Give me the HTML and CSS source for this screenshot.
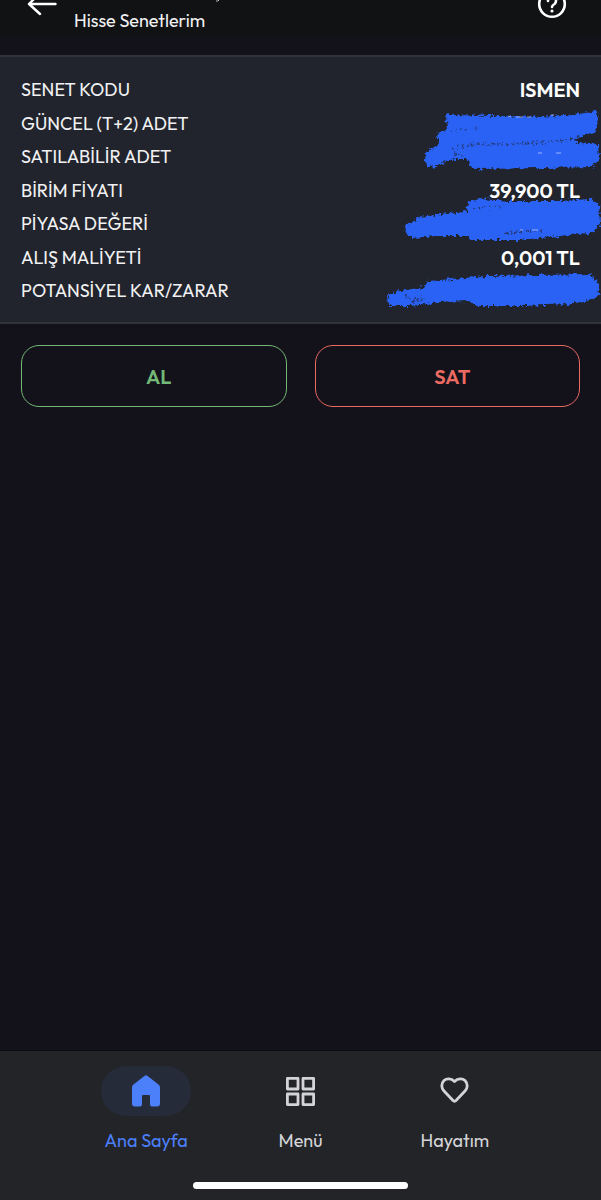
FILE: index.html
```
<!DOCTYPE html>
<html lang="tr">
<head>
    <meta charset="UTF-8">
    <meta name="viewport" content="width=device-width, initial-scale=1.0">
    <title>Hisse Senetlerim</title>
    <link rel="stylesheet" href="styles.css">
</head>
<body>
    <header class="header">
        <button class="icon-button" aria-label="Geri">
            <svg width="32" height="32" viewBox="0 0 32 32" fill="none" stroke="#fff" stroke-width="2.400" stroke-linecap="round" stroke-linejoin="round">
                <path d="M29.500 17H3M14 6L3 17l11 10"/>
            </svg>
        </button>
        <div class="header-text">
            <svg class="header-mark" width="4" height="2" viewBox="0 0 4 2"><path d="M0 1h2l1-1" stroke="#bbb" fill="none"/></svg>
            <h1>Hisse Senetlerim</h1>
        </div>
        <button class="icon-button" aria-label="Yardım">
            <svg width="32" height="32" viewBox="0 0 32 32" fill="none" stroke="#fff" stroke-width="2.600" stroke-linecap="round">
                <circle cx="16" cy="17" r="12.800"/>
                <path d="M12 14a4 4 0 1 1 6.500 3q-2.500 1.500-2.500 3"/>
                <circle cx="16" cy="24" r="1.600" fill="#fff" stroke="none"/>
            </svg>
        </button>
    </header>
    <main>
        <!-- Hisse bilgileri -->
        <section class="card">
            <dl class="details">
                <div class="row"><dt>SENET KODU</dt><dd>ISMEN</dd></div>
                <div class="row"><dt>GÜNCEL (T+2) ADET</dt><dd></dd></div>
                <div class="row"><dt>SATILABİLİR ADET</dt><dd></dd></div>
                <div class="row"><dt>BİRİM FİYATI</dt><dd>39,900 TL</dd></div>
                <div class="row"><dt>PİYASA DEĞERİ</dt><dd></dd></div>
                <div class="row"><dt>ALIŞ MALİYETİ</dt><dd>0,001 TL</dd></div>
                <div class="row"><dt>POTANSİYEL KAR/ZARAR</dt><dd></dd></div>
            </dl>
            <!-- Gizlenen tutarlar -->
            <svg class="scribble" width="221" height="210" viewBox="380 105 221 210" fill="#2962f6" aria-hidden="true">
                <defs>
                    <filter id="rough" x="-5%" y="-15%" width="110%" height="130%">
                        <feTurbulence type="fractalNoise" baseFrequency="0.3" numOctaves="2" seed="4"/>
                        <feDisplacementMap in="SourceGraphic" scale="7" xChannelSelector="R" yChannelSelector="G"/>
                        <feGaussianBlur stdDeviation="0.6"/>
                    </filter>
                </defs>
                <g filter="url(#rough)">
                    <path d="M446 115L500 116 540 117 585 113 597 111 598 121 595 133 575 138 577 143 598 144 599 160 591 167 548 168 472 169 468 159 458 159 446 161 437 166 428 167 424 160 426 152 436 147 439 144 437 133 447 130z"/>
                    <path d="M405 225L421 217 448 213 468 212 467 202 479 199 510 201 560 201 590 199 599 203 600 226 590 233 550 237 519 240 471 240 468 236 437 236 412 238 406 233z"/>
                    <path d="M388 295L400 291 424 287 428 281 465 278 485 276 540 275 590 274 597 280 600 292 596 298 572 304 520 306 475 306 469 301 440 302 409 306 389 306z"/>
                </g>
                <!-- Fırçanın seyrek kalan yerleri -->
                <g filter="url(#rough)" fill="none" stroke="#222a48" stroke-width="2" opacity="0.7">
                    <path stroke-dasharray="2 3" d="M450 131l30-3M452 149l24-5 35 0 50-3M454 153l10 3M560 141l20-2M474 209l30-3M505 233l40-2M405 296l14 4M412 302l12-4"/>
                </g>
                <path d="M508 116l3 1M516 117h7M527 117h4M551 115h3M538 153h4M556 153h5M520 230h3M532 230h6" fill="none" stroke="#c9d8ff" opacity="0.7"/>
            </svg>
        </section>
        <!-- Alım satım butonları -->
        <div class="actions">
            <button class="action-button buy">AL</button>
            <button class="action-button sell">SAT</button>
        </div>
    </main>
    <!-- Alt menü -->
    <footer class="bottom-bar">
        <nav class="nav">
            <a class="nav-item active" href="#">
                <span class="nav-icon">
                    <svg width="32" height="32" viewBox="0 0 32 32" fill="#4c7ffa">
                        <path d="M14.400 1Q16 -0.500 17.600 1L28.500 9.500Q30 10.600 30 12.500V28.500Q30 31.500 27 31.500H22Q20 31.500 20 29.500V21Q20 20 19 20H13Q12 20 12 21V29.500Q12 31.500 10 31.500H5Q2 31.500 2 28.500V12.500Q2 10.600 3.500 9.500z"/>
                    </svg>
                </span>
                Ana Sayfa
            </a>
            <a class="nav-item" href="#">
                <span class="nav-icon">
                    <svg width="32" height="32" viewBox="0 0 32 32" fill="none" stroke="#d4d4d8" stroke-width="2.800" stroke-linejoin="round">
                        <path d="M3.400 3.400H14V14H3.400zM19 3.400h10.600V14H19zM3.400 19H14v10.600H3.400zM19 19h10.600v10.600H19z"/>
                    </svg>
                </span>
                Menü
            </a>
            <a class="nav-item" href="#">
                <span class="nav-icon">
                    <svg width="32" height="32" viewBox="0 0 32 32" fill="none" stroke="#d4d4d8" stroke-width="2.800" stroke-linejoin="round">
                        <path d="M15.500 6.500C12 3 7.500 3.200 5 5.600C2 8.600 2.200 13 4.800 15.800L14 25.500Q15.500 27 17 25.500L26.200 15.800C28.800 13 29 8.600 26 5.600C23.500 3.200 19 3 15.500 6.500z"/>
                    </svg>
                </span>
                Hayatım
            </a>
        </nav>
        <div class="home-indicator"></div>
    </footer>
</body>
</html>
```

FILE: styles.css
```
* {
    box-sizing: border-box;
}
body {
    margin: 0;
    min-height: 100vh;
    display: flex;
    flex-direction: column;
    background-color: #13111a;
    color: #f1f1f3;
    font-family: Outfit, Lato, sans-serif;
    font-size: 18px;
}
button {
    font-family: inherit;
    cursor: pointer;
}
.header {
    display: flex;
    align-items: flex-start;
    height: 36px;
    padding: 0 33px 0 26px;
    background-color: #101213;
    overflow: hidden;
}
.icon-button {
    display: flex;
    margin-top: -13px;
    padding: 0;
    border: none;
    background: none;
}
.header-text {
    flex: 1;
    padding-left: 16px;
}
.header-mark {
    display: block;
    margin-left: 142px;
}
h1 {
    margin: 0;
    padding-top: 7px;
    font-size: 18px;
    line-height: 24px;
    font-weight: 400;
}
main {
    flex: 1;
    padding-top: 19px;
}
.card {
    position: relative;
    padding: 21px 21px 19px;
    background-color: #21242c;
    border-top: 2px solid #32323a;
    border-bottom: 2px solid #32323a;
}
.details {
    display: flex;
    flex-direction: column;
    justify-content: space-between;
    min-height: 225px;
    margin: 0;
}
.row {
    display: flex;
    justify-content: space-between;
    line-height: 24px;
}
dd {
    margin: 0;
    color: #fff;
    font-size: 20px;
    font-weight: 600;
}
.scribble {
    position: absolute;
    top: 48px;
    right: 0;
}
.actions {
    display: flex;
    gap: 28px;
    padding: 21px;
}
.action-button {
    flex: 1;
    height: 62px;
    padding: 0 0 0 10px;
    border: 1px solid;
    border-radius: 18px;
    background: none;
    font-size: 20px;
    font-weight: 600;
}
.buy {
    color: #72b877;
}
.sell {
    color: #eb6b62;
}
.bottom-bar {
    padding: 15px 0 11px;
    background-color: #232427;
    border-top: 1px solid #0d0c12;
}
.nav {
    display: flex;
    padding: 0 69px;
}
.nav-item {
    flex: 1;
    display: flex;
    flex-direction: column;
    align-items: center;
    gap: 13px;
    color: #d4d4d8;
    line-height: 24px;
    text-decoration: none;
}
.nav-item.active {
    color: #4c7ffa;
}
.nav-icon {
    display: flex;
    align-items: center;
    justify-content: center;
    width: 90px;
    height: 50px;
    border-radius: 25px;
}
.active .nav-icon {
    background-color: #252b38;
}
.home-indicator {
    width: 215px;
    height: 7px;
    margin: 29px auto 0;
    border-radius: 4px;
    background-color: #fff;
}
```
